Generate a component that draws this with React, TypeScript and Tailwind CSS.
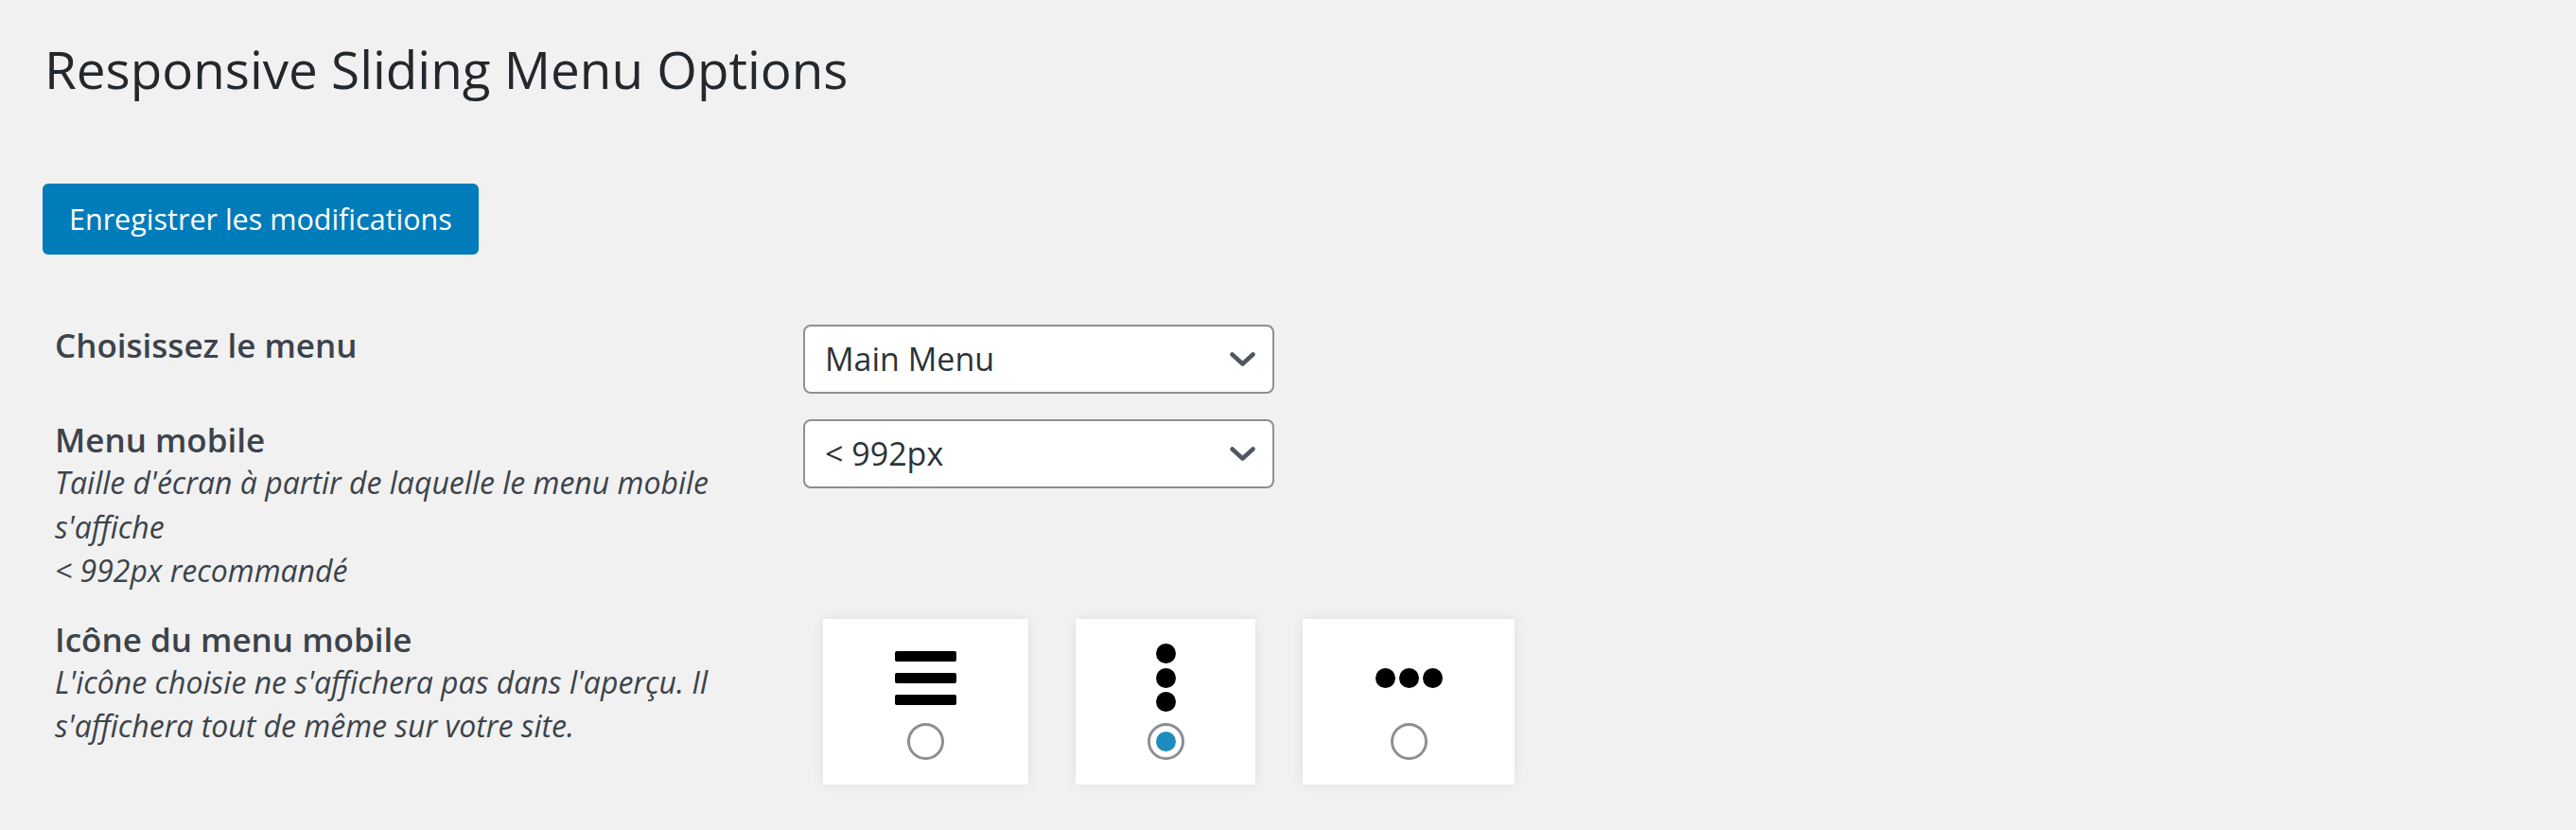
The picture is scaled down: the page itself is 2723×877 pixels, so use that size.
const font = { fontFamily: '"Open Sans", "Noto Sans", sans-serif' };

function Chevron() {
  return (
    <svg width="27" height="15" viewBox="0 0 27 15" fill="none">
      <path d="M2.5 2.5 L13.5 12.5 L24.5 2.5" stroke="#50575e" strokeWidth="4.5" strokeLinecap="round" strokeLinejoin="round" />
    </svg>
  );
}

function Select({ value }: { value: string }) {
  return (
    <div className="flex h-[73px] w-[498px] items-center justify-between rounded-[8px] border-2 border-[#8c8f94] bg-white pl-[21px] pr-[18px] text-[34px] text-[#2c3338]">
      <span>{value}</span>
      <Chevron />
    </div>
  );
}

function Radio({ checked }: { checked?: boolean }) {
  return (
    <div className="flex h-[39px] w-[39px] items-center justify-center rounded-full border-[3px] border-[#8c8f94] bg-white">
      {checked && <div className="h-[21px] w-[21px] rounded-full bg-[#1e8cbe]" />}
    </div>
  );
}

function Hamburger() {
  return (
    <div className="flex flex-col gap-[12px]">
      <div className="h-[11px] w-[65px] rounded-[2px] bg-black" />
      <div className="h-[11px] w-[65px] rounded-[2px] bg-black" />
      <div className="h-[11px] w-[65px] rounded-[2px] bg-black" />
    </div>
  );
}

function VerticalDots() {
  return (
    <div className="flex flex-col gap-[4.5px]">
      <div className="h-[21px] w-[21px] rounded-full bg-black" />
      <div className="h-[21px] w-[21px] rounded-full bg-black" />
      <div className="h-[21px] w-[21px] rounded-full bg-black" />
    </div>
  );
}

function HorizontalDots() {
  return (
    <div className="flex gap-[4px]">
      <div className="h-[21px] w-[21px] rounded-full bg-black" />
      <div className="h-[21px] w-[21px] rounded-full bg-black" />
      <div className="h-[21px] w-[21px] rounded-full bg-black" />
    </div>
  );
}

const icons = [
  { width: "w-[217px]", icon: <Hamburger />, checked: false },
  { width: "w-[190px]", icon: <VerticalDots />, checked: true },
  { width: "w-[224px]", icon: <HorizontalDots />, checked: false },
];

export default function App() {
  return (
    <div className="min-h-screen bg-[#f1f1f1] pl-[47px] pt-[37px]" style={font}>
      <h1 className="text-[54.8px] font-normal leading-[1.3] text-[#23282d]">
        Responsive Sliding Menu Options
      </h1>

      <button className="ml-[-2px] mt-[86px] flex h-[75px] items-center rounded-[6px] bg-[#007cba] px-[28px] text-[30.5px] text-white">
        Enregistrer les modifications
      </button>

      <div className="mt-[74px] flex flex-col gap-[27px] pl-[11px]">
        <div className="flex items-start">
          <div className="w-[791px] text-[35px] font-semibold leading-[44px] text-[#3c434a]">
            Choisissez le menu
          </div>
          <Select value="Main Menu" />
        </div>

        <div className="flex items-start">
          <div className="w-[791px] text-[#3c434a]">
            <div className="text-[35px] font-semibold leading-[44px]">Menu mobile</div>
            <p className="text-[32px] italic leading-[46.5px]">
              Taille d'écran à partir de laquelle le menu mobile
              <br />
              s'affiche
              <br />
              &lt; 992px recommandé
            </p>
          </div>
          <Select value="< 992px" />
        </div>

        <div className="flex items-start">
          <div className="w-[791px] text-[#3c434a]">
            <div className="text-[35px] font-semibold leading-[44px]">Icône du menu mobile</div>
            <p className="text-[32px] italic leading-[46.5px]">
              L'icône choisie ne s'affichera pas dans l'aperçu. Il
              <br />
              s'affichera tout de même sur votre site.
            </p>
          </div>
          <div className="ml-[21px] flex gap-[50px]">
            {icons.map((item, i) => (
              <div
                key={i}
                className={`${item.width} flex h-[175px] flex-col items-center bg-white pt-[26px] shadow-[0_0_12px_rgba(0,0,0,0.08)]`}
              >
                <div className="flex h-[73px] items-center justify-center">{item.icon}</div>
                <div className="mt-[11px]">
                  <Radio checked={item.checked} />
                </div>
              </div>
            ))}
          </div>
        </div>
      </div>
    </div>
  );
}
